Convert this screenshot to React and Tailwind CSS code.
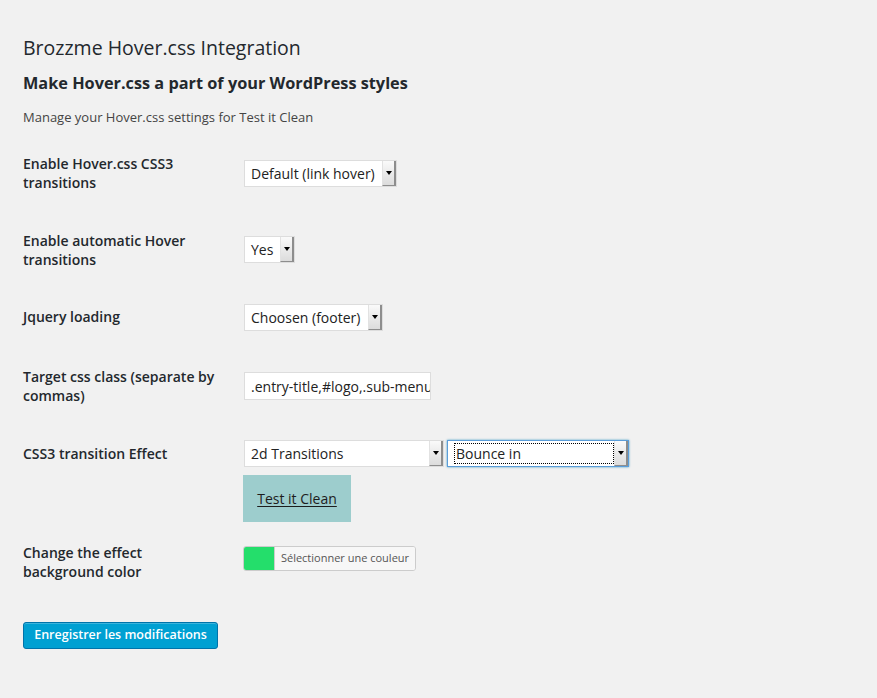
import React from "react";

function Arrow() {
  return (
    <div className="w-[14px] self-stretch flex items-center justify-center bg-gradient-to-b from-[#fafafa] to-[#dcdcdc] border-r-2 border-b border-[#8d8d8d] border-l border-l-[#e2e2e2]">
      <div className="w-0 h-0 border-l-[3px] border-r-[3px] border-t-[4px] border-l-transparent border-r-transparent border-t-black" />
    </div>
  );
}

function FakeSelect({ value, width, focused }) {
  return (
    <div
      className={
        "flex items-stretch bg-white h-[27px] " +
        width +
        (focused ? " border border-[#5b9dd9] shadow-[0_0_2px_rgba(30,140,190,0.8)]" : " border border-[#dddddd]")
      }
    >
      <div className="flex-1 flex items-center pl-[6px] text-[14px] text-[#222] overflow-hidden whitespace-nowrap">
        <span className={focused ? "border border-dotted border-black w-full pl-px leading-[19px]" : ""}>{value}</span>
      </div>
      <Arrow />
    </div>
  );
}

function Row({ label, labelTop = 0, contentTop = 0, height, children }) {
  return (
    <div className={"flex items-start " + height}>
      <div className="w-[221px] shrink-0 pr-[4px] text-[14px] leading-[19px] font-semibold text-[#23282d]" style={{ paddingTop: labelTop }}>
        {label}
      </div>
      <div style={{ paddingTop: contentTop }}>{children}</div>
    </div>
  );
}

export default function App() {
  return (
    <div className="min-h-[698px] bg-[#f1f1f1] pl-[23px] pt-[34px] text-[#444]" style={{ fontFamily: '"Open Sans", sans-serif' }}>
      <h2 className="text-[19.5px] leading-[28px] font-normal text-[#23282d]">Brozzme Hover.css Integration</h2>
      <h3 className="mt-[10px] text-[16.3px] leading-[22px] font-bold text-[#23282d]">Make Hover.css a part of your WordPress styles</h3>
      <p className="mt-[14px] text-[13px] leading-[19px] text-[#444]">Manage your Hover.css settings for Test it Clean</p>

      <div className="mt-[27px]">
        <Row label={<>Enable Hover.css CSS3<br />transitions</>} contentTop={6} height="h-[77px]">
          <FakeSelect value="Default (link hover)" width="w-[153px]" />
        </Row>
        <Row label={<>Enable automatic Hover<br />transitions</>} contentTop={5} height="h-[73px]">
          <FakeSelect value="Yes" width="w-[51px]" />
        </Row>
        <Row label="Jquery loading" labelTop={3} height="h-[63px]">
          <FakeSelect value="Choosen (footer)" width="w-[139px]" />
        </Row>
        <Row label={<>Target css class (separate by<br />commas)</>} contentTop={5} height="h-[73px]">
          <div className="w-[187px] h-[28px] bg-white border border-[#dddddd] flex items-center pl-[6px] text-[14px] text-[#222] overflow-hidden whitespace-nowrap">
            .entry-title,#logo,.sub-menu
          </div>
        </Row>
        <Row label="CSS3 transition Effect" labelTop={4} height="h-[103px]">
          <div className="flex gap-[3px]">
            <FakeSelect value="2d Transitions" width="w-[200px]" />
            <FakeSelect value="Bounce in" width="w-[182px]" focused />
          </div>
          <div className="mt-[8px] -ml-px w-[108px] h-[47px] bg-[#9dcdcd] flex items-center justify-center text-[14px] text-[#1d1d1d] underline underline-offset-2">
            Test it Clean
          </div>
        </Row>
        <Row label={<>Change the effect<br />background color</>} contentTop={3} height="h-[78px]">
          <div className="-ml-px flex h-[25px] w-[173px] rounded-[3px] border border-[#cccccc] bg-[#f7f7f7] overflow-hidden">
            <div className="w-[30px] bg-[#24de6b]" />
            <div className="flex-1 flex items-center justify-center bg-[#f7f7f7] border-l border-[#cccccc] text-[11px] text-[#555]">
              Sélectionner une couleur
            </div>
          </div>
        </Row>
      </div>

      <button className="h-[27px] w-[195px] rounded-[3px] bg-[#00a0d2] border border-[#0073aa] text-white text-[12.5px] font-semibold shadow-[inset_0_1px_0_rgba(120,200,230,0.5)]">
        Enregistrer les modifications
      </button>
    </div>
  );
}
